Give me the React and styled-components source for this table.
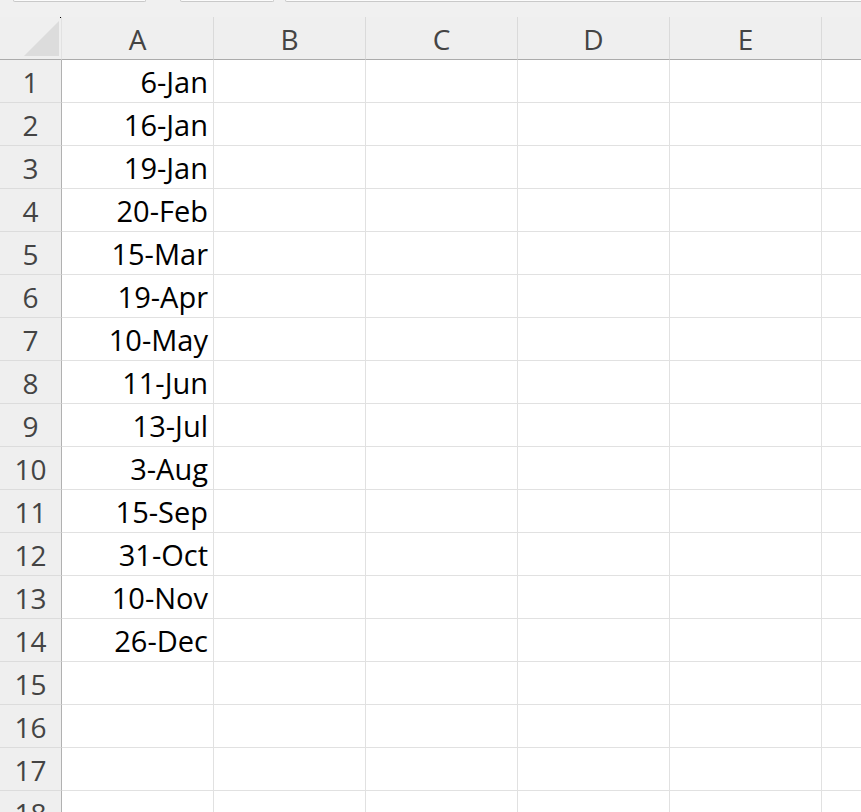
import { Fragment } from "react";
import styled, { createGlobalStyle } from "styled-components";

const GlobalStyle = createGlobalStyle`
  html, body {
    margin: 0;
    padding: 0;
    background: #ffffff;
    overflow: hidden;
  }
  body {
    font-family: "Open Sans", "Noto Sans", "Liberation Sans", sans-serif;
  }
`;

const Page = styled.div`
  width: 861px;
  height: 812px;
  overflow: hidden;
  background: #ffffff;
  display: flex;
  flex-direction: column;
`;

const Strip = styled.div`
  height: 17px;
  flex-shrink: 0;
  background: #f0f0f0;
  display: flex;
  align-items: flex-start;
  padding-left: 13px;
`;

const Field = styled.div`
  height: 1px;
  width: ${(p) => p.$w}px;
  margin-right: ${(p) => p.$gap}px;
  background: #fbfbfb;
  border: 1px solid #c9c9c9;
  border-top: none;
  border-radius: 0 0 3px 3px;
  flex-shrink: 0;
`;

const Sheet = styled.div`
  display: grid;
  grid-template-columns: 62px repeat(6, 152px);
  grid-auto-rows: 43px;
`;

const Corner = styled.div`
  background: #efefef;
  border-bottom: 1px solid #ababab;
  border-right: 1px solid #e2e2e2;
  display: flex;
  align-items: flex-end;
  justify-content: flex-end;
  padding: 0 2px 3px 0;
  position: relative;

  &::before {
    content: "";
    position: absolute;
    left: 60px;
    top: 0;
    width: 1px;
    height: 1px;
    background: #000;
  }
`;

const Triangle = styled.div`
  width: 35px;
  height: 35px;
  background: #dcdcdc;
  clip-path: polygon(100% 0, 100% 100%, 0 100%);
`;

const ColHead = styled.div`
  background: #efefef;
  border-bottom: 1px solid #ababab;
  border-right: 1px solid #dadada;
  color: #444444;
  font-size: 28px;
  display: flex;
  align-items: center;
  justify-content: center;
  padding-top: 2px;
  box-sizing: border-box;
`;

const RowHead = styled.div`
  background: #efefef;
  border-right: 1px solid #b1b1b1;
  border-bottom: 1px solid #dcdcdc;
  color: #444444;
  font-size: 28px;
  display: flex;
  align-items: center;
  justify-content: center;
  box-sizing: border-box;
  padding-top: 1px;
`;

const Cell = styled.div`
  border-right: 1px solid #e1e1e1;
  border-bottom: 1px solid #e1e1e1;
  color: #000000;
  font-size: 29px;
  display: flex;
  align-items: center;
  justify-content: flex-end;
  padding: 1px 5px 0 0;
  box-sizing: border-box;
  white-space: nowrap;
`;

const columns = ["A", "B", "C", "D", "E", ""];

const dates = [
  "6-Jan",
  "16-Jan",
  "19-Jan",
  "20-Feb",
  "15-Mar",
  "19-Apr",
  "10-May",
  "11-Jun",
  "13-Jul",
  "3-Aug",
  "15-Sep",
  "31-Oct",
  "10-Nov",
  "26-Dec",
];

export default function App() {
  const rows = Array.from({ length: 18 }, (_, i) => i + 1);

  return (
    <>
      <GlobalStyle />
      <Page>
        <Strip>
          <Field $w={131} $gap={34} />
          <Field $w={92} $gap={11} />
          <Field $w={600} $gap={0} />
        </Strip>
        <Sheet>
          <Corner>
            <Triangle />
          </Corner>
          {columns.map((c, i) => (
            <ColHead key={"h" + i}>{c}</ColHead>
          ))}
          {rows.map((r) => (
            <Fragment key={"r" + r}>
              <RowHead>{r}</RowHead>
              {columns.map((c, i) => (
                <Cell key={r + "-" + i}>{i === 0 ? dates[r - 1] || "" : ""}</Cell>
              ))}
            </Fragment>
          ))}
        </Sheet>
      </Page>
    </>
  );
}
